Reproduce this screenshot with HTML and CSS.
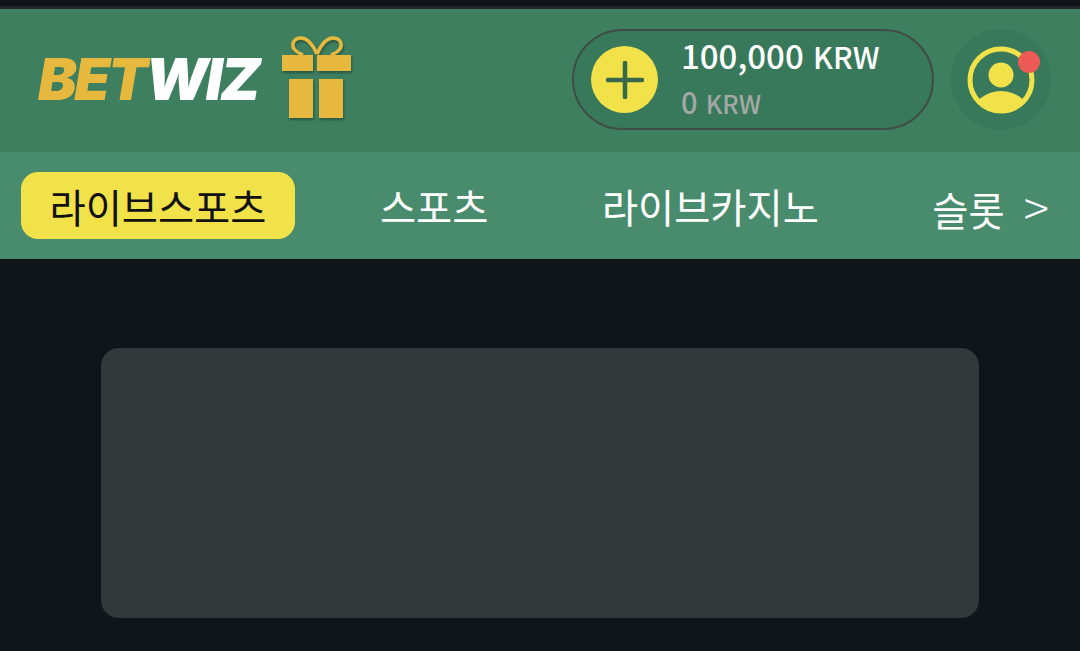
FILE: index.html
```html
<!DOCTYPE html>
<html lang="ko">
<head>
    <meta charset="UTF-8">
    <meta name="viewport" content="width=device-width, initial-scale=1.0">
    <title>BETWIZ</title>
    <link rel="stylesheet" href="styles.css">
</head>
<body>
    <div class="status-bar"></div>

    <!-- Header -->
    <header class="top-bar">
        <div class="logo"><span class="logo-gold">BET</span><span class="logo-white">WIZ</span></div>
        <svg class="gift" viewBox="0 0 74 86" width="74" height="86">
            <path d="M38 19 C34 10 28 3 22 3 C15 3 12 9 15 14 C18 18 22 19 24 20 M38 19 C42 10 48 3 54 3 C61 3 64 9 61 14 C58 18 54 19 52 20" fill="none" stroke="#e6b93e" stroke-width="3.5"/>
            <rect x="3" y="20" width="31" height="16" fill="#e6b93e"/>
            <rect x="38" y="20" width="34" height="16" fill="#e6b93e"/>
            <rect x="10" y="44" width="24" height="39" fill="#e6b93e"/>
            <rect x="40" y="44" width="24" height="39" fill="#e6b93e"/>
        </svg>
        <div class="wallet">
            <div class="add-btn">
                <svg viewBox="0 0 38 38" width="38" height="38">
                    <path d="M2 19 H36 M19 2 V36" stroke="#38694a" stroke-width="4.5" stroke-linecap="round"/>
                </svg>
            </div>
            <div class="balance">
                <div class="balance-main">100,000 <small>KRW</small></div>
                <div class="balance-sub">0 <small>KRW</small></div>
            </div>
        </div>
        <div class="profile">
            <svg viewBox="0 0 68 68" width="68" height="68">
                <defs>
                    <clipPath id="ring"><circle cx="34" cy="34" r="31"/></clipPath>
                </defs>
                <circle cx="34" cy="34" r="31" fill="none" stroke="#f2e24a" stroke-width="5"/>
                <circle cx="34" cy="29" r="12.5" fill="#f2e24a"/>
                <ellipse cx="34" cy="70" rx="29" ry="25" fill="#f2e24a" clip-path="url(#ring)"/>
            </svg>
            <span class="badge"></span>
        </div>
    </header>

    <!-- Nav -->
    <nav class="menu">
        <a class="menu-item active">라이브스포츠</a>
        <a class="menu-item">스포츠</a>
        <a class="menu-item">라이브카지노</a>
        <a class="menu-item">슬롯<span class="more">&gt;</span></a>
    </nav>

    <main class="content">
        <div class="banner"></div>
    </main>
</body>
</html>
```

FILE: styles.css
```css
body {
    margin: 0;
    height: 651px;
    overflow: hidden;
    background: #10151c;
    font-family: "Noto Sans CJK KR", "Noto Sans", sans-serif;
}
.status-bar {
    height: 6px;
    background: #111319;
    border-bottom: 3px solid #23272b;
}
.top-bar {
    height: 141px;
    background: #3e7f60;
    display: flex;
    align-items: center;
    padding: 0 29px 2px 38px;
}
.logo {
    width: 241px;
    margin-bottom: 2px;
    font-family: Inter, Roboto, sans-serif;
    font-weight: 900;
    font-style: italic;
    font-size: 58px;
    line-height: 1;
    letter-spacing: -2.4px;
}
.logo-gold {
    color: #e6b93e;
}
.logo-white {
    color: #fff;
}
.gift {
    margin-top: -3px;
    filter: drop-shadow(1px 2px 1px rgba(20, 50, 35, 0.5));
}
.wallet {
    box-sizing: border-box;
    margin-left: auto;
    margin-right: 17px;
    width: 362px;
    height: 101px;
    border: 2px solid #3f4c47;
    border-radius: 51px;
    background: #38795c;
    display: flex;
    align-items: center;
    padding-left: 17px;
}
.add-btn {
    width: 67px;
    height: 67px;
    border-radius: 50%;
    background: #f2e24a;
    display: flex;
    align-items: center;
    justify-content: center;
}
.balance {
    margin-left: 23px;
}
.balance-main {
    color: #fff;
    font-size: 33px;
    line-height: 45px;
    font-weight: 500;
}
.balance-main small {
    font-size: 30px;
}
.balance-sub {
    color: #a3a8a5;
    font-size: 29px;
    line-height: 45px;
    font-weight: 500;
}
.balance-sub small {
    font-size: 25px;
}
.profile {
    position: relative;
    width: 100px;
    height: 101px;
    border-radius: 50%;
    background: #38795c;
    display: flex;
    align-items: center;
    justify-content: center;
}
.badge {
    position: absolute;
    top: 22px;
    right: 11px;
    width: 22px;
    height: 22px;
    border-radius: 50%;
    background: #ee5a55;
}
.menu {
    height: 107px;
    background: #488c6d;
    display: flex;
    align-items: center;
    gap: 56.5px;
    padding-left: 21px;
}
.menu-item {
    color: #fff;
    font-size: 39.3px;
    line-height: 67px;
    height: 67px;
    padding: 0 28.5px;
    white-space: nowrap;
}
.menu-item.active {
    background: #f2e24a;
    color: #111;
    border-radius: 17px;
}
.more {
    margin-left: 19px;
    font-weight: 300;
    font-size: 47px;
}
.content {
    padding: 89px 101px 0;
}
.banner {
    height: 270px;
    background: #33383b;
    border-radius: 18px;
}
```
